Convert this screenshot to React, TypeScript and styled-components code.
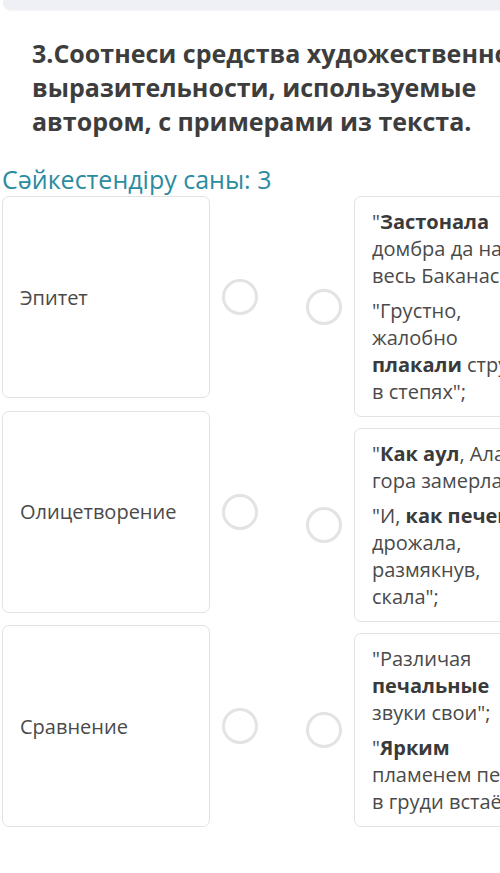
import styled, { createGlobalStyle } from 'styled-components';

const GlobalStyle = createGlobalStyle`
  html, body {
    margin: 0;
    padding: 0;
    background: #ffffff;
    overflow: hidden;
  }
  body {
    font-family: 'Open Sans', 'Noto Sans', 'DejaVu Sans', sans-serif;
    color: #4a4a4a;
  }
`;

const Page = styled.div`
  width: 640px;
  padding-left: 2px;
`;

const TopBar = styled.div`
  height: 10px;
  margin-left: 1px;
  background: #eff0f5;
  border-radius: 0 0 0 8px;
  box-shadow: 0 1px 2px rgba(0, 0, 0, 0.04);
`;

const Title = styled.h1`
  width: 530px;
  margin: 26px 0 0 30px;
  font-size: 25px;
  line-height: 34px;
  font-weight: 700;
  color: #3d3d3d;
`;

const Counter = styled.div`
  margin-top: 26px;
  font-size: 25px;
  line-height: 30px;
  color: #2b8ba0;
`;

const Board = styled.div`
  display: flex;
  gap: 48px;
  margin-top: 2px;
`;

const Column = styled.div<{ $gap: number }>`
  display: flex;
  flex-direction: column;
  gap: ${p => p.$gap}px;
`;

const Item = styled.div`
  display: flex;
  align-items: center;
  gap: 12px;
`;

const Box = styled.div`
  box-sizing: border-box;
  border: 1px solid #e2e2e2;
  border-radius: 7px;
  background: #ffffff;
`;

const LabelBox = styled(Box)`
  width: 208px;
  height: 202px;
  display: flex;
  align-items: center;
  padding: 0 17px;
  font-size: 20px;
  color: #4a4a4a;
`;

const ExampleBox = styled(Box)`
  width: 220px;
  padding: 11px 17px;
  display: flex;
  flex-direction: column;
  gap: 8px;
  font-size: 20px;
  line-height: 27px;
  color: #4a4a4a;
`;

const Para = styled.div``;

const Line = styled.span`
  display: block;
  white-space: nowrap;
`;

const Strong = styled.b`
  font-weight: 700;
  color: #3a3a3a;
`;

const Dot = styled.div`
  box-sizing: border-box;
  width: 36px;
  height: 36px;
  flex: none;
  border: 3px solid #e3e3e3;
  border-radius: 50%;
`;

const labels = ['Эпитет', 'Олицетворение', 'Сравнение'];

const App = () => (
  <Page>
    <GlobalStyle />
    <TopBar />
    <Title>
      3.Соотнеси средства художественной выразительности, используемые
      автором, с примерами из текста.
    </Title>
    <Counter>Сәйкестендіру саны: 3</Counter>
    <Board>
      <Column $gap={12.5}>
        {labels.map(label => (
          <Item key={label}>
            <LabelBox>{label}</LabelBox>
            <Dot />
          </Item>
        ))}
      </Column>
      <Column $gap={11}>
        <Item>
          <Dot />
          <ExampleBox>
            <Para>
              <Line>"<Strong>Застонала</Strong></Line>
              <Line>домбра да над</Line>
              <Line>весь Баканас";</Line>
            </Para>
            <Para>
              <Line>"Грустно,</Line>
              <Line>жалобно</Line>
              <Line><Strong>плакали</Strong> струны</Line>
              <Line>в степях";</Line>
            </Para>
          </ExampleBox>
        </Item>
        <Item>
          <Dot />
          <ExampleBox>
            <Para>
              <Line>"<Strong>Как аул</Strong>, Алатау</Line>
              <Line>гора замерла";</Line>
            </Para>
            <Para>
              <Line>"И, <Strong>как печенег</Strong>,</Line>
              <Line>дрожала,</Line>
              <Line>размякнув,</Line>
              <Line>скала";</Line>
            </Para>
          </ExampleBox>
        </Item>
        <Item>
          <Dot />
          <ExampleBox>
            <Para>
              <Line>"Различая</Line>
              <Line><Strong>печальные</Strong></Line>
              <Line>звуки свои";</Line>
            </Para>
            <Para>
              <Line>"<Strong>Ярким</Strong></Line>
              <Line>пламенем песня</Line>
              <Line>в груди встаёт".</Line>
            </Para>
          </ExampleBox>
        </Item>
      </Column>
    </Board>
  </Page>
);

export default App;
